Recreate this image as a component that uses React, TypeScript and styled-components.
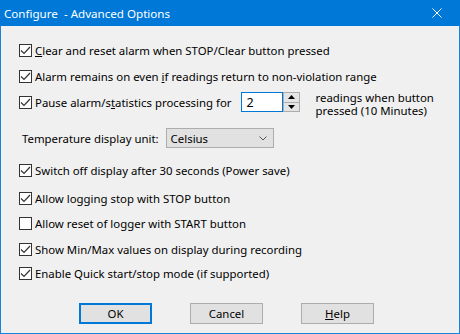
import React from "react";
import styled, { createGlobalStyle, css } from "styled-components";

const GlobalStyle = createGlobalStyle`
  html, body {
    margin: 0;
    padding: 0;
    background: #f0f0f0;
  }
  body {
    font-family: "Segoe UI", "Noto Sans", "Liberation Sans", sans-serif;
    font-size: 11.4px;
    color: #000;
  }
`;

const Window = styled.div`
  width: 460px;
  height: 334px;
  box-sizing: border-box;
  border: 1px solid #1883d7;
  border-top: none;
  background: #f0f0f0;
  display: flex;
  flex-direction: column;
`;

const TitleBar = styled.div`
  height: 26px;
  background: #0078d7;
  color: #fff;
  display: flex;
  align-items: center;
  justify-content: space-between;
  padding: 0 0 0 4px;
  margin: 0 -1px;
  font-size: 11.6px;
  white-space: pre;
`;

const CloseButton = styled.div`
  width: 46px;
  height: 26px;
  display: flex;
  align-items: center;
  justify-content: center;
`;

const Body = styled.div`
  flex: 1;
  display: flex;
  flex-direction: column;
  padding: 16px 0 0 18px;
`;

const Row = styled.div<{ $top: number; $align?: string }>`
  display: flex;
  align-items: ${(p) => p.$align || "center"};
  margin-top: ${(p) => p.$top}px;
  height: 16px;
`;

const CheckLabel = styled.label`
  display: flex;
  align-items: center;
  gap: 3px;
  height: 16px;
  white-space: nowrap;
  flex-shrink: 0;
`;

const Box = styled.span`
  width: 13px;
  height: 13px;
  box-sizing: border-box;
  border: 1px solid #333;
  background: #fff;
  display: flex;
  align-items: center;
  justify-content: center;
  flex-shrink: 0;
`;

const Spin = styled.div`
  display: flex;
  height: 20px;
  margin: -2px 0 0 9px;
  flex-shrink: 0;
`;

const SpinInput = styled.div`
  width: 42px;
  box-sizing: border-box;
  border: 1px solid #0078d7;
  background: #fff;
  padding: 1px 0 0 5px;
  line-height: 17px;
  font-size: 12.5px;
`;

const SpinButtons = styled.div`
  width: 17px;
  box-sizing: border-box;
  border: 1px solid #adadad;
  border-left: none;
  display: flex;
  flex-direction: column;
  background: #f0f0f0;
`;

const SpinHalf = styled.div<{ $bottom?: boolean }>`
  flex: 1;
  display: flex;
  align-items: center;
  justify-content: center;
  background: #e5e5e5;
  border-left: 1px solid #adadad;
  ${(p) =>
    p.$bottom &&
    css`
      border-top: 1px solid #adadad;
    `}
`;

const SideNote = styled.div`
  margin-left: 16px;
  margin-top: -3px;
  display: flex;
  flex-direction: column;
  white-space: nowrap;
`;

const NoteLine = styled.span`
  line-height: 14px;
  height: 13px;
`;

const SelectLabel = styled.span`
  padding-left: 3px;
  white-space: nowrap;
  flex-shrink: 0;
`;

const Select = styled.div`
  width: 108px;
  height: 20px;
  box-sizing: border-box;
  border: 1px solid #adadad;
  background: #e1e1e1;
  margin-left: 7px;
  display: flex;
  align-items: center;
  justify-content: space-between;
  padding: 1px 6px 0 4px;
  flex-shrink: 0;
`;

const ButtonBar = styled.div`
  display: flex;
  gap: 38px;
  margin-top: auto;
  margin-bottom: 9px;
  padding-left: 60px;
`;

const Button = styled.button<{ $default?: boolean }>`
  width: 73px;
  height: 21px;
  box-sizing: border-box;
  background: #e1e1e1;
  border: ${(p) => (p.$default ? "2px solid #0078d7" : "1px solid #adadad")};
  font: inherit;
  color: #000;
  padding: 0;
  display: flex;
  align-items: center;
  justify-content: center;
`;

const Check = () => (
  <svg width="11" height="11" viewBox="0 0 11 11">
    <polyline points="1,5.5 4,8.5 10,2" fill="none" stroke="#333" strokeWidth="1.2" />
  </svg>
);

const CheckItem = ({ checked, children }: { checked: boolean; children: React.ReactNode }) => (
  <CheckLabel>
    <Box>{checked && <Check />}</Box>
    <span>{children}</span>
  </CheckLabel>
);

export default function App() {
  return (
    <>
      <GlobalStyle />
      <Window>
        <TitleBar>
          <span>{"Configure  - Advanced Options"}</span>
          <CloseButton>
            <svg width="10" height="10" viewBox="0 0 10 10">
              <path d="M0.5 0.5 L9.5 9.5 M9.5 0.5 L0.5 9.5" stroke="#fff" strokeWidth="1" />
            </svg>
          </CloseButton>
        </TitleBar>
        <Body>
          <Row $top={0}>
            <CheckItem checked>
              <u>C</u>lear and reset alarm when STOP/Clear button pressed
            </CheckItem>
          </Row>
          <Row $top={10}>
            <CheckItem checked>
              Alarm remains on even <u>i</u>f readings return to non-violation range
            </CheckItem>
          </Row>
          <Row $top={10} $align="flex-start">
            <CheckItem checked>
              Pause alarm/s<u>t</u>atistics processing for
            </CheckItem>
            <Spin>
              <SpinInput>2</SpinInput>
              <SpinButtons>
                <SpinHalf>
                  <svg width="7" height="4" viewBox="0 0 7 4">
                    <path d="M0 4 L3.5 0 L7 4 Z" fill="#000" />
                  </svg>
                </SpinHalf>
                <SpinHalf $bottom>
                  <svg width="7" height="4" viewBox="0 0 7 4">
                    <path d="M0 0 L3.5 4 L7 0 Z" fill="#000" />
                  </svg>
                </SpinHalf>
              </SpinButtons>
            </Spin>
            <SideNote>
              <NoteLine>readings when button</NoteLine>
              <NoteLine>pressed (10 Minutes)</NoteLine>
            </SideNote>
          </Row>
          <Row $top={20}>
            <SelectLabel>Temperature display unit:</SelectLabel>
            <Select>
              <span>Celsius</span>
              <svg width="8" height="5" viewBox="0 0 8 5">
                <polyline points="0.5,0.5 4,4 7.5,0.5" fill="none" stroke="#555" strokeWidth="1" />
              </svg>
            </Select>
          </Row>
          <Row $top={16}>
            <CheckItem checked>Switch off display after 30 seconds (Power save)</CheckItem>
          </Row>
          <Row $top={12}>
            <CheckItem checked>Allow logging stop with STOP button</CheckItem>
          </Row>
          <Row $top={9}>
            <CheckItem checked={false}>Allow reset of logger with START button</CheckItem>
          </Row>
          <Row $top={10}>
            <CheckItem checked>Show Min/Max values on display during recording</CheckItem>
          </Row>
          <Row $top={8}>
            <CheckItem checked>Enable Quick start/stop mode (if supported)</CheckItem>
          </Row>
          <ButtonBar>
            <Button $default>OK</Button>
            <Button>Cancel</Button>
            <Button>
              <span>
                <u>H</u>elp
              </span>
            </Button>
          </ButtonBar>
        </Body>
      </Window>
    </>
  );
}
